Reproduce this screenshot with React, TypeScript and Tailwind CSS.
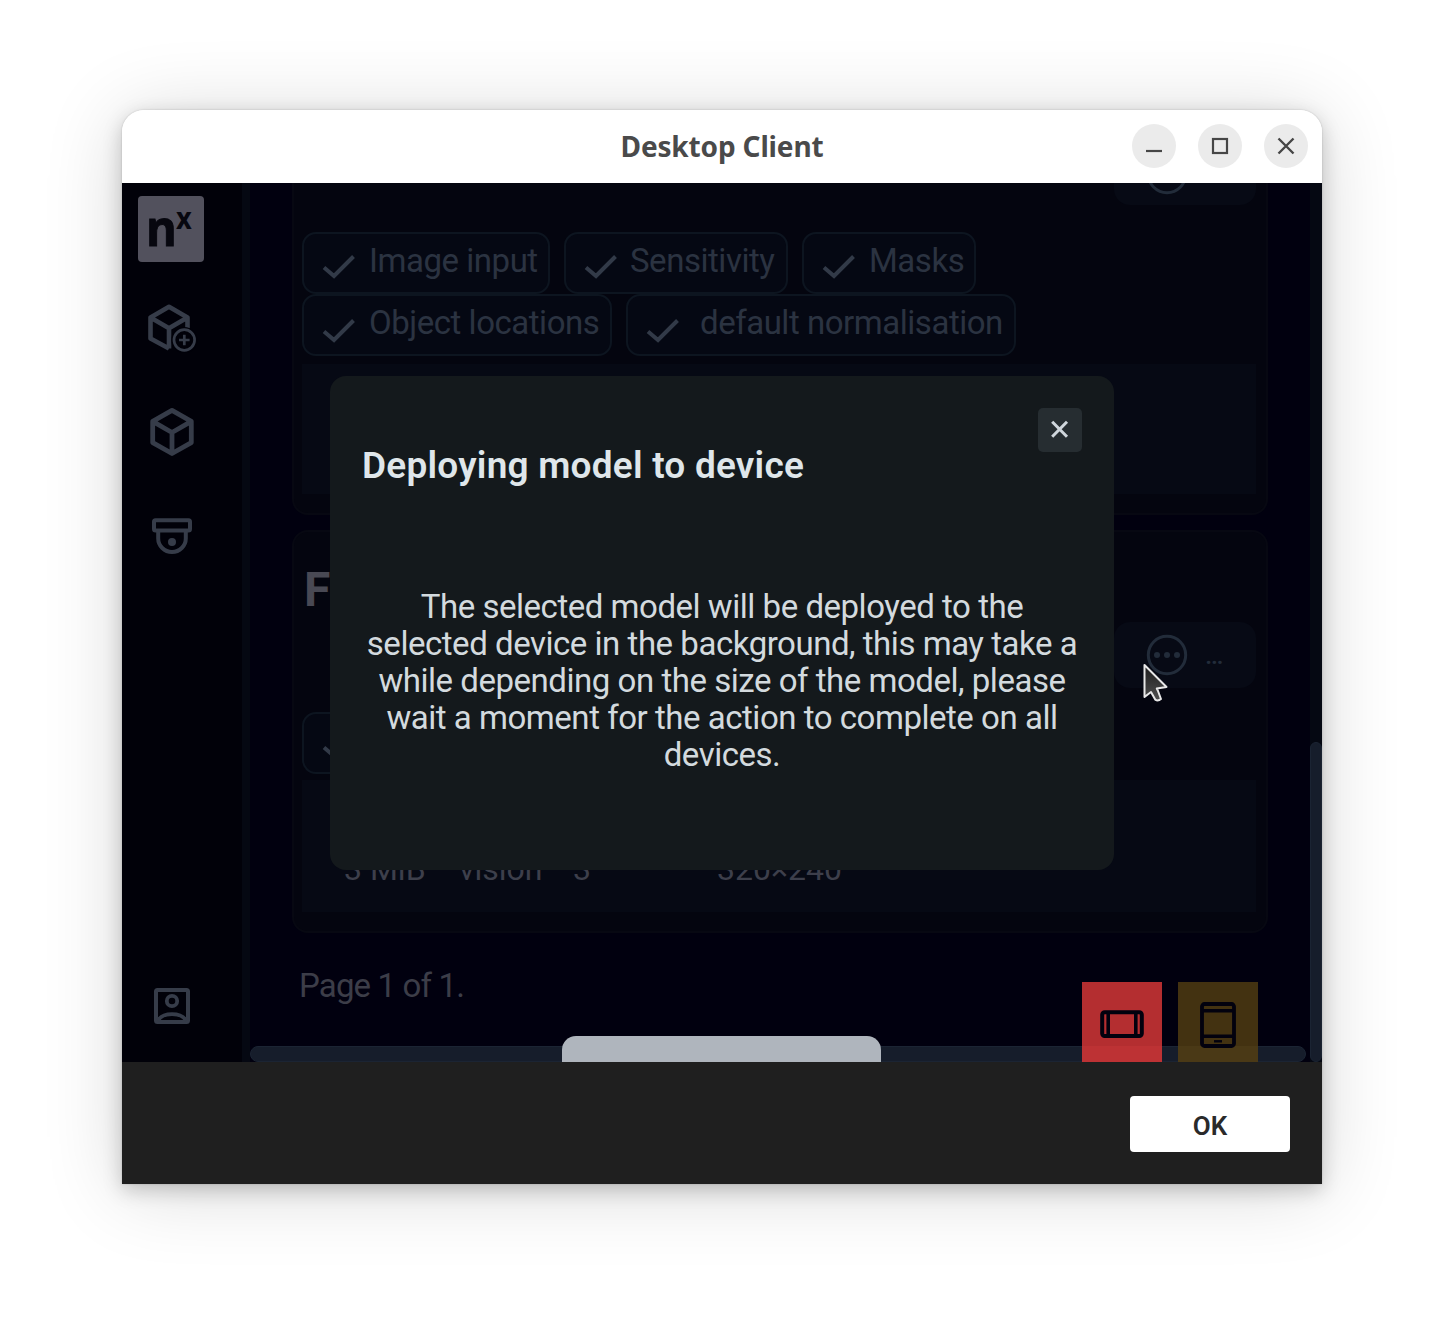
import type { ReactNode } from "react";

function Check({ className = "" }: { className?: string }) {
  return (
    <svg width="34" height="26" viewBox="0 0 34 26" className={`shrink-0 ${className}`} fill="none">
      <path d="M2 13.5 L12 22 L31.5 2.5" stroke="#323a48" strokeWidth="4" />
    </svg>
  );
}

function Tag({ children, box, label = "", low }: { children?: ReactNode; box: string; label?: string; low?: boolean }) {
  return (
    <div className={`flex h-[62px] shrink-0 rounded-[14px] border-2 border-[#0d1520] bg-[#050813] pl-[18px] ${box}`}>
      <Check className={low ? "mt-[22px]" : "mt-[20px]"} />
      {children && (
        <span className={`mt-[8px] whitespace-pre text-[33px] leading-[38px] tracking-[-0.47px] text-[#2b3341] ${label}`}>{children}</span>
      )}
    </div>
  );
}

function Logo() {
  return (
    <div className="relative h-[66px] w-[66px] rounded-[4px] bg-[#52515d] font-['Open_Sans'] font-bold text-[#07070f]">
      <span className="absolute left-[8px] top-[4px] origin-left scale-x-[.92] text-[51px] leading-[52px] [-webkit-text-stroke:1px_#07070f]">n</span>
      <span className="absolute left-[38px] top-[6px] origin-left scale-x-[.88] text-[31px] leading-[31px]">x</span>
    </div>
  );
}

function Sidebar() {
  return (
    <nav className="flex w-[120px] shrink-0 flex-col pl-4 pt-[13px]">
      <Logo />
      <svg width="68" height="52" viewBox="138 302 68 52" className="mt-10" fill="none" stroke="#363c49">
        <path d="M187.5 328V317.5L169 306.8L150.5 317.5V338.5L169 348.5M150.5 317.5L169 328.2L187.5 317.5M169 328V348.5" strokeWidth="4.6" strokeLinejoin="round" />
        <circle cx="184.3" cy="340" r="13" fill="#010109" stroke="none" />
        <circle cx="184.3" cy="340" r="10.3" strokeWidth="2.7" />
        <path d="M179 340h10.6M184.3 334.7v10.6" strokeWidth="2.7" />
      </svg>
      <svg width="68" height="52" viewBox="138 406 68 52" className="mt-[52px]" fill="none" stroke="#363c49">
        <path d="M172 410.3L191.3 421.4V442.6L172 453.5L152.7 442.6V421.4ZM152.7 421.4L172 432.5L191.3 421.4M172 432.5V453.5" strokeWidth="4.8" strokeLinejoin="round" />
      </svg>
      <svg width="68" height="42" viewBox="138 515 68 42" className="mt-[57px]" fill="none" stroke="#363c49" strokeWidth="4">
        <rect x="154" y="520.2" width="36" height="10.4" rx="1.5" />
        <path d="M158.2 531V538.5A13.8 13.5 0 0 0 185.8 538.5V531" />
        <circle cx="172" cy="542" r="4" fill="#363c49" stroke="none" />
      </svg>
      <svg width="68" height="42" viewBox="138 985 68 42" className="mt-auto mb-[35px]" fill="none" stroke="#363c49" strokeWidth="4">
        <rect x="156" y="990" width="32" height="32" rx="1.5" />
        <circle cx="172" cy="1001" r="5.2" strokeWidth="3.8" />
        <path d="M158 1020.5C163 1012 181 1012 186 1020.5" strokeWidth="3.8" />
      </svg>
    </nav>
  );
}

function TopCard() {
  return (
    <section className="h-[332px] rounded-b-[16px] border-2 border-t-0 border-[#070812] bg-[#04050f] px-[8px]">
      <div className="ml-auto mr-[2px] flex h-[22px] w-[142px] justify-center overflow-hidden rounded-b-[16px] bg-[#070a15]">
        <svg width="44" height="44" viewBox="0 0 44 44" className="mr-[36px] mt-[-31px]" fill="none">
          <circle cx="22" cy="22" r="18.7" stroke="#222c3a" strokeWidth="3" />
        </svg>
      </div>
      <div className="mt-[27px] flex gap-[14px]">
        <Tag box="w-[248px]" label="ml-[13px]">Image input</Tag>
        <Tag box="w-[224px]" label="ml-[12px]">Sensitivity</Tag>
        <Tag box="w-[174px]" label="ml-[13px]">Masks</Tag>
      </div>
      <div className="flex gap-[14px]">
        <Tag low box="w-[310px]" label="ml-[13px]">Object locations</Tag>
        <Tag low box="w-[390px]" label="ml-[20px]">default normalisation</Tag>
      </div>
      <div className="mr-[2px] mt-[8px] h-[130px] bg-[#060914]" />
    </section>
  );
}

function BottomCard() {
  return (
    <section className="mt-[15px] flex h-[403px] flex-col rounded-[16px] border-2 border-[#070812] bg-[#04050f] px-[8px]">
      <h2 className="ml-[2px] mt-[30px] text-[48px] font-bold leading-[56px] text-[#494954]">F</h2>
      <div className="ml-auto mr-[2px] mt-[4px] flex h-[66px] w-[142px] items-center rounded-[16px] bg-[#070a15]">
        <svg width="44" height="44" viewBox="0 0 44 44" className="ml-[31px]" fill="none">
          <circle cx="22" cy="22" r="18.7" stroke="#222c3a" strokeWidth="3" />
          <g fill="#222c3a">
            <circle cx="12" cy="22" r="3" />
            <circle cx="22" cy="22" r="3" />
            <circle cx="32" cy="22" r="3" />
          </g>
        </svg>
        <span className="ml-[16px] text-[26px] font-medium leading-[28px] text-[#222c3a]">…</span>
      </div>
      <div className="mt-[24px] flex">
        <Tag box="w-[248px]" />
      </div>
      <div className="mr-[2px] mt-[6px] flex h-[132px] items-end bg-[#060914] pb-[24px] pl-[42px] text-[32px] leading-[38px] text-[#3d3f4b]">
        <span className="w-[115px] whitespace-nowrap">3 MiB</span>
        <span className="w-[114px]">vision</span>
        <span className="w-[144px]">3</span>
        <span>320×240</span>
      </div>
    </section>
  );
}

function Dialog() {
  return (
    <div className="absolute left-[208px] top-[193px] flex h-[494px] w-[784px] flex-col rounded-[16px] bg-[#14191c] px-8 pt-8">
      <div className="flex h-[44px] w-[44px] items-center justify-center self-end rounded-[5px] bg-[#262d31]">
        <svg width="20" height="20" viewBox="0 0 20 20" stroke="#cfd6dc" strokeWidth="3">
          <path d="M2.2 1.7L17 16.8M17 1.7L2.2 16.8" />
        </svg>
      </div>
      <h1 className="mt-[-7px] whitespace-nowrap text-[37px] font-semibold leading-[42px] tracking-[0.22px] text-[#dfe6ea]">Deploying model to device</h1>
      <p className="mt-[101px] whitespace-nowrap text-center text-[33px] leading-[37px] tracking-[-0.47px] text-[#d3dade]">
        The selected model will be deployed to the<br />
        selected device in the background, this may take a<br />
        while depending on the size of the model, please<br />
        wait a moment for the action to complete on all<br />
        devices.
      </p>
    </div>
  );
}

function FloatingTools() {
  return (
    <div className="absolute right-[64px] bottom-0 flex gap-4">
      <div className="flex h-20 w-20 items-center justify-center bg-[linear-gradient(#b42e30_64px,#bd3234_64px)]">
        <svg width="46" height="30" viewBox="0 0 46 30" className="mt-[4px]" fill="none" stroke="#02010e" strokeWidth="4">
          <rect x="3.2" y="3.2" width="39.6" height="23.8" rx="2.5" />
          <path d="M9.2 3V27M36.8 3V27" strokeWidth="3.6" />
        </svg>
      </div>
      <div className="flex h-20 w-20 items-center justify-center bg-[linear-gradient(#433211_64px,#4a3916_64px)]">
        <svg width="36" height="46" viewBox="0 0 36 46" className="mt-[6px]" fill="none" stroke="#02010e" strokeWidth="3.8">
          <rect x="2" y="2" width="32" height="42" rx="2.5" />
          <path d="M2 8.8H34M2 34.2H34" strokeWidth="3.4" />
          <path d="M14 39.3H22" strokeWidth="2.4" />
        </svg>
      </div>
    </div>
  );
}

function TitleBar() {
  return (
    <header className="grid h-[73px] grid-cols-[1fr_auto_1fr] items-center rounded-t-[22px] bg-white pb-[2px]">
      <span />
      <span className="font-['Noto_Sans'] text-[28px] font-bold leading-[36px] tracking-[-0.15px] text-[#4a4a4a]">Desktop Client</span>
      <div className="flex justify-end gap-[22px] pr-[14px]">
        <svg width="44" height="44" viewBox="0 0 44 44" fill="none" stroke="#464646" strokeWidth="2.2">
          <circle cx="22" cy="22" r="22" fill="#ebebeb" stroke="none" />
          <path d="M14 27H30" />
        </svg>
        <svg width="44" height="44" viewBox="0 0 44 44" fill="none" stroke="#464646" strokeWidth="2.2">
          <circle cx="22" cy="22" r="22" fill="#ebebeb" stroke="none" />
          <rect x="15" y="15" width="14" height="14" />
        </svg>
        <svg width="44" height="44" viewBox="0 0 44 44" fill="none" stroke="#464646" strokeWidth="2.4">
          <circle cx="22" cy="22" r="22" fill="#ebebeb" stroke="none" />
          <path d="M14.5 14.5L29.5 29.5M29.5 14.5L14.5 29.5" />
        </svg>
      </div>
    </header>
  );
}

export default function App() {
  return (
    <div className="h-[1318px] w-[1444px] overflow-hidden bg-white pt-[110px] font-['Roboto',sans-serif]">
      <div className="mx-auto flex h-[1074px] w-[1200px] flex-col rounded-t-[22px] shadow-[0_0_2px_rgba(0,0,0,.2),0_6px_20px_rgba(0,0,0,.2),0_6px_80px_rgba(0,0,0,.16)]">
        <TitleBar />
        <div className="relative flex h-[879px] overflow-hidden bg-[#010109]">
          <Sidebar />
          <div className="w-2 shrink-0 bg-[#050812]" />
          <main className="flex w-[1060px] shrink-0 flex-col bg-[#01000f]">
            <div className="ml-[42px] mr-[42px] flex flex-col">
              <TopCard />
              <BottomCard />
              <p className="ml-[7px] mt-[34px] text-[33px] leading-[38px] tracking-[-0.85px] text-[#3c3d48]">Page 1 of 1.</p>
            </div>
            <div className="mt-auto mr-1 h-4 rounded-[8px] border border-[#1b2433] bg-[#161d2b]" />
          </main>
          <div className="flex w-3 shrink-0 flex-col justify-end bg-[#050812]">
            <div className="h-[320px] rounded-[6px] border border-[#1b2433] bg-[#161d2b]" />
          </div>
          <div className="absolute bottom-0 left-[440px] h-[26px] w-[319px] rounded-t-[14px] bg-[#afb5bd]" />
          <FloatingTools />
          <Dialog />
          <svg width="30" height="42" viewBox="0 0 30 42" className="absolute left-[1020px] top-[478px]">
            <defs>
              <linearGradient id="pointer" x1="0" y1="0" x2="0" y2="1">
                <stop offset="0" stopColor="#1c1c1c" />
                <stop offset="1" stopColor="#505050" />
              </linearGradient>
            </defs>
            <path d="M2.5 4V36L9 31L13.2 38.6Q16 40.5 19 38L15.8 29.5L14.8 27.5L24.5 26Z" fill="url(#pointer)" stroke="#e8e8e8" strokeWidth="2" strokeLinejoin="round" />
          </svg>
        </div>
        <footer className="flex h-[122px] items-center justify-end bg-[#1f1f1f] pr-8 pt-[2px]">
          <button className="h-14 w-40 rounded-[4px] bg-white pt-[3px] text-[26px] font-semibold leading-none text-[#2a2a2a]">OK</button>
        </footer>
      </div>
    </div>
  );
}
